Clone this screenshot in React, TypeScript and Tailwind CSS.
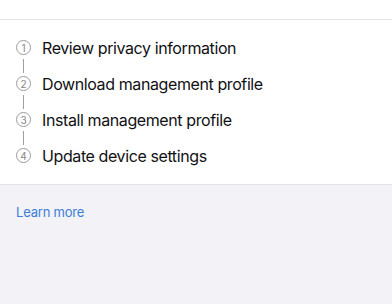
const steps = [
  "Review privacy information",
  "Download management profile",
  "Install management profile",
  "Update device settings",
];

function StepNumber({ n }: { n: number }) {
  return (
    <div className="flex h-[15px] w-[15px] shrink-0 items-center justify-center rounded-full border border-[#9c9ca1] text-[10px] leading-none text-[#86868b]">
      {n}
    </div>
  );
}

export default function App() {
  return (
    <div
      className="flex h-[304px] w-[392px] flex-col bg-[#f2f2f7]"
      style={{ fontFamily: "Inter, 'Liberation Sans', sans-serif" }}
    >
      <div className="h-[20px] border-b border-[#e3e3e8] bg-white" />
      <div className="flex flex-col border-b border-[#e3e3e8] bg-white px-4 pb-[21px] pt-[20px]">
        {steps.map((label, i) => (
          <div key={label} className="flex flex-col">
            <div className="flex h-[15px] items-center gap-[11px]">
              <StepNumber n={i + 1} />
              <span className="whitespace-nowrap text-[16px] leading-none tracking-[-0.4px] text-[#111113]">
                {label}
              </span>
            </div>
            {i < steps.length - 1 && (
              <div className="flex h-[21px] w-[15px] items-center justify-center">
                <div className="h-[14px] w-px bg-[#9c9ca1]" />
              </div>
            )}
          </div>
        ))}
      </div>
      <div className="px-4 pt-[19px] text-[13px] leading-4">
        <span className="tracking-[-0.2px] text-[#3b7fd9]">Learn more</span>
      </div>
    </div>
  );
}
